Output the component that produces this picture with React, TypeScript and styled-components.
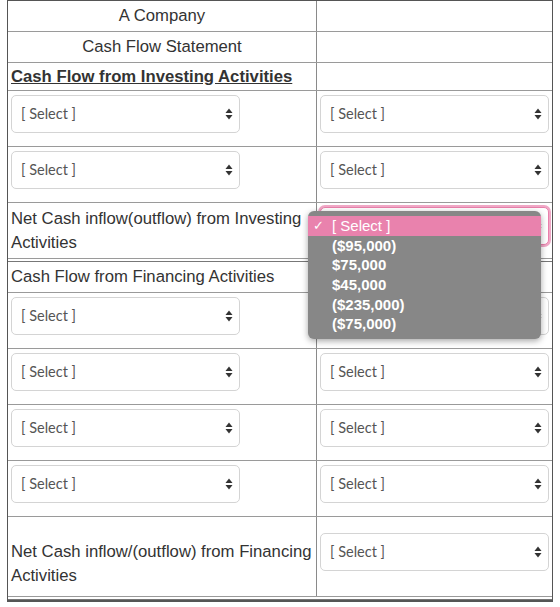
import React from 'react';
import styled, { createGlobalStyle } from 'styled-components';

const GlobalStyle = createGlobalStyle`
  body {
    margin: 0;
    background: #ffffff;
    font-family: "Liberation Sans", Arial, sans-serif;
  }
`;

const Sheet = styled.div`
  margin-left: 7px;
  width: 546px;
  border: 1px solid #555;
  border-bottom-width: 2px;
  box-sizing: border-box;
  color: #333;
  font-size: 16.7px;
`;

const Row = styled.div<{ h: number }>`
  display: grid;
  grid-template-columns: 309px 1fr;
  height: ${p => p.h}px;
  border-bottom: 1px solid #9a9a9a;
  box-sizing: border-box;
`;

const Spacer = styled.div`
  height: 3px;
  border-bottom: 1px solid #777;
  box-sizing: border-box;
`;

const Cell = styled.div<{ center?: boolean; shift?: number }>`
  position: relative;
  display: flex;
  align-items: center;
  justify-content: ${p => (p.center ? 'center' : 'flex-start')};
  padding: ${p => p.shift || 0}px 3px 0;
  line-height: 24px;
  &:first-child {
    border-right: 1px solid #8a8a8a;
  }
`;

const Heading = styled.span`
  font-weight: bold;
  text-decoration: underline;
`;

const SelectBox = styled.div<{ focused?: boolean }>`
  width: 229px;
  height: 38px;
  margin-bottom: 10px;
  box-sizing: border-box;
  border: 1px solid ${p => (p.focused ? '#e97fab' : '#d4d4d4')};
  box-shadow: ${p => (p.focused ? '0 0 0 2px #f0a8c6' : 'none')};
  border-radius: 5px;
  display: flex;
  align-items: center;
  justify-content: space-between;
  padding: 0 6px 0 9px;
  font-family: Lato, "Open Sans", sans-serif;
  font-size: 14.5px;
  color: #555;
  background: #fff;
`;

const Popup = styled.div`
  position: absolute;
  left: -9px;
  top: 8px;
  width: 233px;
  padding: 5px 0;
  background: #878787;
  border-radius: 6px;
  box-shadow: 0 2px 6px rgba(0, 0, 0, 0.35);
  z-index: 2;
  font-family: "Liberation Sans", Arial, sans-serif;
  font-size: 15px;
  font-weight: bold;
  color: #fff;
`;

const Option = styled.div<{ selected?: boolean }>`
  height: 19.7px;
  line-height: 20px;
  display: flex;
  align-items: center;
  padding-left: 24px;
  position: relative;
  background: ${p => (p.selected ? '#e982ad' : 'transparent')};
  font-weight: ${p => (p.selected ? 'normal' : 'bold')};
`;

const Check = styled.span`
  position: absolute;
  left: 5px;
  font-size: 13px;
`;

function Arrows() {
  return (
    <svg width="8" height="12" viewBox="0 0 8 12">
      <path d="M4 0.5 L7.5 5 L0.5 5 Z" fill="#333" />
      <path d="M4 11.5 L7.5 7 L0.5 7 Z" fill="#333" />
    </svg>
  );
}

function Select({ focused }: { focused?: boolean }) {
  return (
    <SelectBox focused={focused}>
      <span>[ Select ]</span>
      <Arrows />
    </SelectBox>
  );
}

const options = ['($95,000)', '$75,000', '$45,000', '($235,000)', '($75,000)'];

function SelectRow() {
  return (
    <Row h={56}>
      <Cell><Select /></Cell>
      <Cell><Select /></Cell>
    </Row>
  );
}

export default function App() {
  return (
    <>
      <GlobalStyle />
      <Sheet>
        <Row h={31}>
          <Cell center>A Company</Cell>
          <Cell />
        </Row>
        <Row h={31}>
          <Cell center>Cash Flow Statement</Cell>
          <Cell />
        </Row>
        <Row h={28}>
          <Cell><Heading>Cash Flow from Investing Activities</Heading></Cell>
          <Cell />
        </Row>
        <SelectRow />
        <SelectRow />
        <Row h={56}>
          <Cell>Net Cash inflow(outflow) from Investing Activities</Cell>
          <Cell>
            <Select focused />
            <Popup>
              <Option selected><Check>✓</Check>[ Select ]</Option>
              {options.map(o => (
                <Option key={o}>{o}</Option>
              ))}
            </Popup>
          </Cell>
        </Row>
        <Spacer />
        <Row h={31}>
          <Cell>Cash Flow from Financing Activities</Cell>
          <Cell />
        </Row>
        <SelectRow />
        <SelectRow />
        <SelectRow />
        <SelectRow />
        <Row h={80}>
          <Cell shift={14}>Net Cash inflow/(outflow) from Financing Activities</Cell>
          <Cell><Select /></Cell>
        </Row>
        <Spacer />
      </Sheet>
    </>
  );
}
